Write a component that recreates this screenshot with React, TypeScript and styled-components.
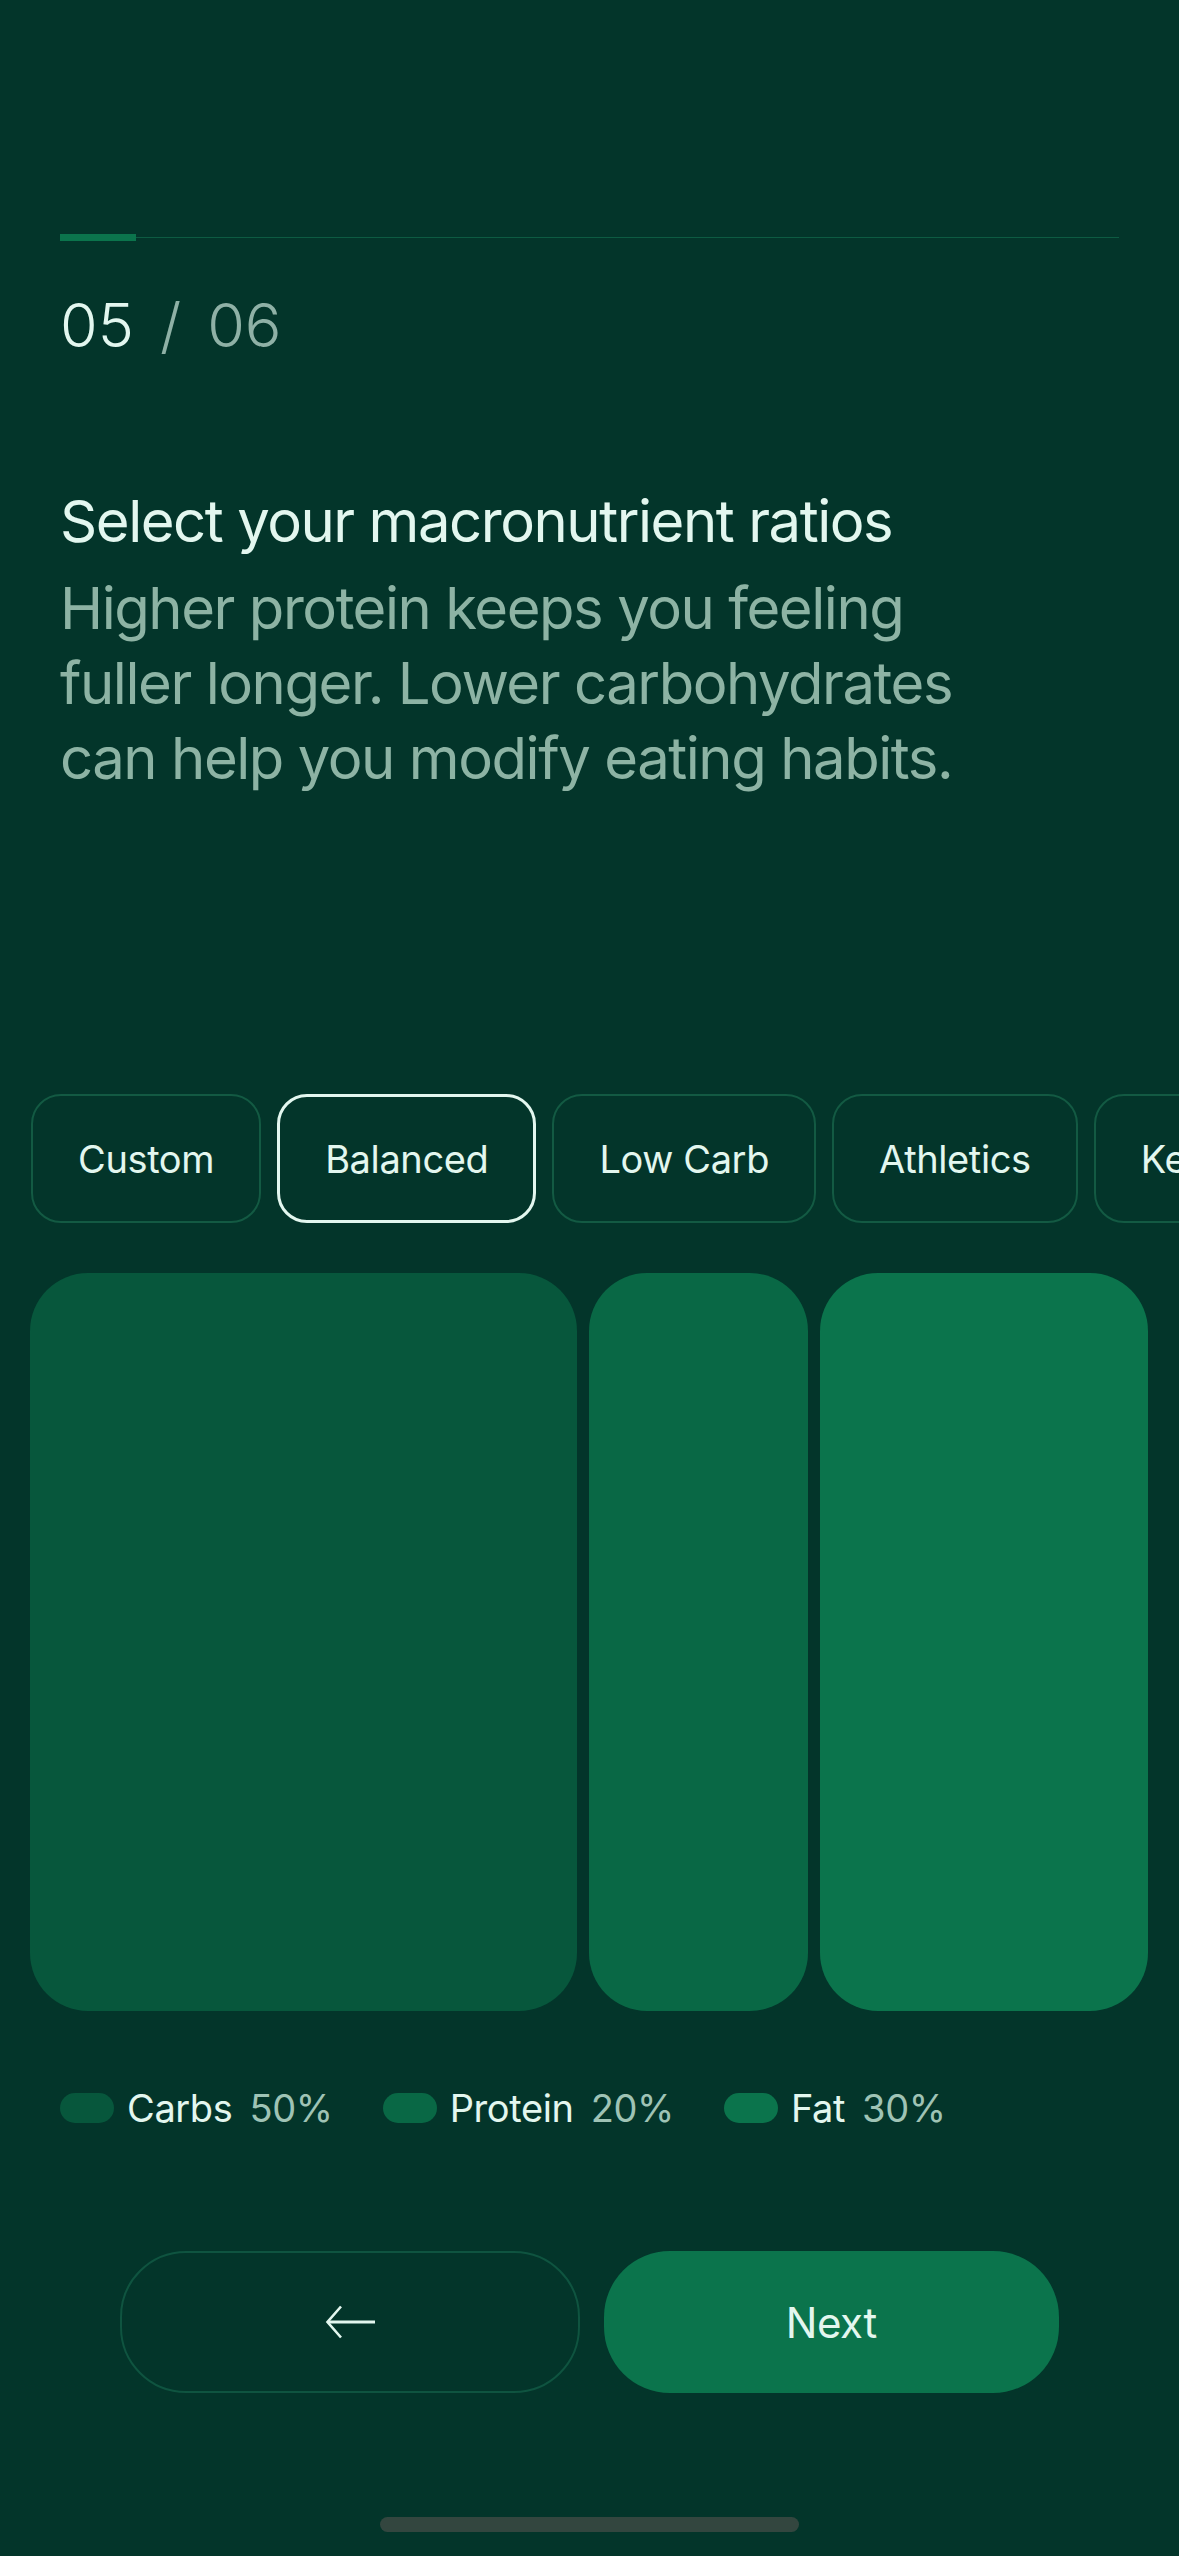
import React from "react";
import styled, { createGlobalStyle } from "styled-components";

const Global = createGlobalStyle`
  html, body { margin: 0; padding: 0; background: #03352a; }
  body { font-family: Inter, "Noto Sans", sans-serif; -webkit-font-smoothing: antialiased; }
  * { box-sizing: border-box; }
`;

const Page = styled.div`
  width: 1179px;
  height: 2556px;
  background: #03352a;
  color: #e3f7ef;
  display: flex;
  flex-direction: column;
  overflow: hidden;
`;

const Header = styled.header`
  padding: 234px 60px 0;
  display: flex;
  flex-direction: column;
`;

const Progress = styled.div`
  height: 7px;
  display: flex;
  align-items: center;
`;

const Track = styled.div`
  flex: 1;
  height: 1px;
  background: #0d5b42;
`;

const Fill = styled.div<{ $w: number }>`
  width: ${(p) => p.$w}px;
  height: 7px;
  background: #0b744c;
`;

const Counter = styled.div`
  margin-top: 54px;
  font-size: 61px;
  line-height: 60px;
  font-weight: 300;
  color: #e3f7ef;
  display: flex;
  gap: 26px;
`;

const Muted = styled.span`
  color: #8fb1a6;
`;

const Title = styled.h1`
  margin: 136px 0 0;
  font-size: 58px;
  line-height: 60px;
  font-weight: 400;
  letter-spacing: -0.025em;
  color: #e3f7ef;
`;

const Description = styled.p`
  margin: 20px 0 0;
  font-size: 58px;
  line-height: 75px;
  font-weight: 400;
  letter-spacing: -0.025em;
  color: #8db3a4;
`;

const Tabs = styled.div`
  margin-top: 298px;
  display: flex;
  gap: 16px;
  padding-left: 31px;
  overflow: hidden;
`;

const Tab = styled.button<{ $active?: boolean }>`
  flex: none;
  height: 129px;
  padding: 0 45px;
  border-radius: 30px;
  border: ${(p) => (p.$active ? "3px solid #e3f7ef" : "2px solid #135a43")};
  background: transparent;
  color: #e3f7ef;
  font-family: Inter, sans-serif;
  font-size: 38px;
  font-weight: 400;
  letter-spacing: -0.01em;
  display: flex;
  align-items: center;
  justify-content: center;
`;

const Bars = styled.div`
  margin-top: 50px;
  height: 738px;
  padding: 0 31px 0 30px;
  display: flex;
  gap: 12px;
`;

const Bar = styled.div<{ $grow: number; $color: string }>`
  flex: ${(p) => p.$grow} 1 0;
  background: ${(p) => p.$color};
  border-radius: 58px;
`;

const Legend = styled.div`
  margin-top: 82px;
  padding-left: 60px;
  display: flex;
  align-items: center;
  gap: 50px;
  height: 30px;
`;

const LegendItem = styled.div`
  display: flex;
  align-items: center;
  font-size: 38px;
  line-height: 30px;
  letter-spacing: -0.01em;
`;

const Swatch = styled.span<{ $color: string }>`
  width: 54px;
  height: 30px;
  border-radius: 15px;
  background: ${(p) => p.$color};
  margin-right: 13px;
`;

const LegendLabel = styled.span`
  color: #e3f7ef;
  margin-right: 17px;
`;

const LegendValue = styled.span`
  color: #9fc3b5;
`;

const Actions = styled.div`
  margin-top: 128px;
  padding: 0 120px;
  display: flex;
  gap: 24px;
`;

const BaseButton = styled.button`
  flex: 1;
  height: 142px;
  border-radius: 66px;
  display: flex;
  align-items: center;
  justify-content: center;
  font-family: Inter, sans-serif;
  font-size: 42px;
  font-weight: 400;
  color: #e3f7ef;
`;

const BackButton = styled(BaseButton)`
  background: transparent;
  border: 2px solid #0f5440;
`;

const NextButton = styled(BaseButton)`
  background: #0b744c;
  border: none;
  letter-spacing: -0.01em;
`;

const HomeIndicator = styled.div`
  margin: 124px auto 0;
  width: 419px;
  height: 15px;
  border-radius: 8px;
  background: #33463f;
`;

const tabs = ["Custom", "Balanced", "Low Carb", "Athletics", "Keto"];

const macros = [
  { label: "Carbs", value: 50, color: "#07573c" },
  { label: "Protein", value: 20, color: "#096845" },
  { label: "Fat", value: 30, color: "#0b744c" },
];

export default function App() {
  return (
    <Page>
      <Global />
      <Header>
        <Progress>
          <Fill $w={76} />
          <Track />
        </Progress>
        <Counter>
          <span>05</span>
          <Muted>/</Muted>
          <Muted>06</Muted>
        </Counter>
        <Title>Select your macronutrient ratios</Title>
        <Description>
          Higher protein keeps you feeling
          <br />
          fuller longer. Lower carbohydrates
          <br />
          can help you modify eating habits.
        </Description>
      </Header>
      <Tabs>
        {tabs.map((t) => (
          <Tab key={t} $active={t === "Balanced"}>
            {t}
          </Tab>
        ))}
      </Tabs>
      <Bars>
        {macros.map((m) => (
          <Bar key={m.label} $grow={m.value} $color={m.color} />
        ))}
      </Bars>
      <Legend>
        {macros.map((m) => (
          <LegendItem key={m.label}>
            <Swatch $color={m.color} />
            <LegendLabel>{m.label}</LegendLabel>
            <LegendValue>{m.value}%</LegendValue>
          </LegendItem>
        ))}
      </Legend>
      <Actions>
        <BackButton aria-label="Back">
          <svg width="52" height="36" viewBox="0 0 52 36" fill="none">
            <path d="M51 18H4" stroke="#e3f7ef" strokeWidth="3.2" />
            <path d="M17 2.5L3.5 18L17 33.5" stroke="#e3f7ef" strokeWidth="2.6" strokeLinejoin="miter" />
          </svg>
        </BackButton>
        <NextButton>Next</NextButton>
      </Actions>
      <HomeIndicator />
    </Page>
  );
}
